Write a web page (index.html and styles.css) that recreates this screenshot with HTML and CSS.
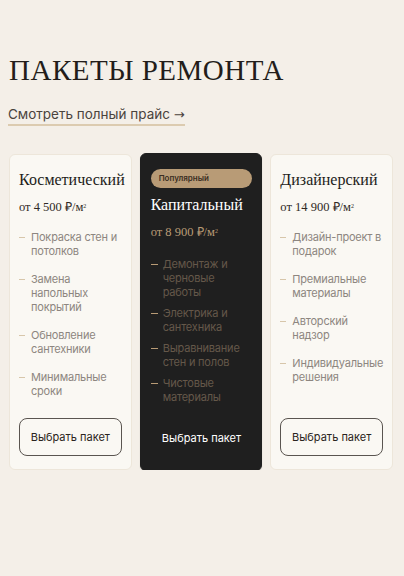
FILE: index.html
```html
<!DOCTYPE html>
<html lang="ru">
<head>
<meta charset="UTF-8">
<meta name="viewport" content="width=device-width, initial-scale=1.0">
<title>Пакеты ремонта</title>
<link rel="stylesheet" href="styles.css">
</head>
<body>

<section class="packages">
    <h2 class="packages-title">ПАКЕТЫ РЕМОНТА</h2>
    <a href="#" class="price-link">Смотреть полный прайс <span class="arrow">→</span></a>

    <div class="cards">
        <!-- Light card -->
        <div class="card">
            <h3 class="card-title">Косметический</h3>
            <p class="card-price">от 4 500 ₽/м<sup>2</sup></p>
            <ul class="card-list">
                <li>Покраска стен и потолков</li>
                <li>Замена напольных покрытий</li>
                <li>Обновление сантехники</li>
                <li>Минимальные сроки</li>
            </ul>
            <button class="card-button">Выбрать пакет</button>
        </div>

        <!-- Featured card -->
        <div class="card card-dark">
            <span class="badge">Популярный</span>
            <h3 class="card-title">Капитальный</h3>
            <p class="card-price">от 8 900 ₽/м<sup>2</sup></p>
            <ul class="card-list">
                <li>Демонтаж и черновые работы</li>
                <li>Электрика и сантехника</li>
                <li>Выравнивание стен и полов</li>
                <li>Чистовые материалы</li>
            </ul>
            <button class="card-button">Выбрать пакет</button>
        </div>

        <div class="card">
            <h3 class="card-title">Дизайнерский</h3>
            <p class="card-price">от 14 900 ₽/м<sup>2</sup></p>
            <ul class="card-list">
                <li>Дизайн-проект в подарок</li>
                <li>Премиальные материалы</li>
                <li>Авторский надзор</li>
                <li>Индивидуальные решения</li>
            </ul>
            <button class="card-button">Выбрать пакет</button>
        </div>
    </div>
</section>

</body>
</html>
```

FILE: styles.css
```css
body {
    margin: 0;
    background-color: #f4efe8;
    font-family: Inter, "Noto Sans", sans-serif;
    color: #2a2420;
}

/* Section wrapper */
.packages {
    padding: 52px 11px 0 9px;
}

.packages-title {
    margin: 0;
    font-family: "Liberation Serif", serif;
    font-weight: normal;
    font-size: 29px;
    line-height: 36px;
    letter-spacing: 0.5px;
    color: #231d1a;
}

.price-link {
    display: inline-block;
    margin-top: 18px;
    font-size: 13.5px;
    line-height: 16px;
    color: #4a433d;
    text-decoration: none;
    border-bottom: 2px solid #dccbb0;
    padding-bottom: 1px;
    margin-left: -1px;
}

.arrow {
    font-family: "DejaVu Sans", sans-serif;
    font-size: 13px;
}

/* Cards grid */
.cards {
    display: grid;
    grid-template-columns: repeat(3, minmax(0, 1fr));
    gap: 8px;
    margin-top: 28px;
}

.card {
    display: flex;
    flex-direction: column;
    background-color: #faf8f3;
    border: 1px solid #ede6da;
    border-radius: 6px;
    padding: 14px 9px 13px 9px;
}

.card-dark {
    background-color: #1f1f1f;
    border-color: #1f1f1f;
    margin: -1px 0;
    padding-left: 10px;
    box-shadow: 0 1px 1px rgba(0, 0, 0, 0.25);
}

.badge {
    align-self: stretch;
    height: 19px;
    line-height: 19px;
    border-radius: 10px;
    background-color: #b89b76;
    color: #3a2e22;
    font-size: 8px;
    font-weight: 600;
    padding-left: 8px;
    margin: 1px 0 6px 0;
}

.card-title {
    margin: 0;
    font-family: "Liberation Serif", serif;
    font-weight: normal;
    font-size: 16px;
    line-height: 21px;
    color: #231d1a;
}

.card-dark .card-title {
    color: #ffffff;
}

.card-price {
    margin: 10px 0 0 0;
    font-family: "Liberation Serif", serif;
    font-size: 12.5px;
    line-height: 15px;
    color: #2f2824;
}

.card-price sup {
    font-size: 6px;
    vertical-align: top;
    position: relative;
    top: -1px;
}

.card-dark .card-price {
    color: #b89b76;
}

/* Feature list */
.card-list {
    list-style: none;
    margin: 15px 0 0 0;
    padding: 0;
    flex: 1;
    display: flex;
    flex-direction: column;
    gap: 14px;
    font-size: 11px;
    line-height: 14px;
    letter-spacing: -0.2px;
    color: #8d8680;
}

.card-dark .card-list {
    gap: 7px;
    color: #65584a;
    margin-top: 17px;
}

.card-list li {
    position: relative;
    padding-left: 12px;
}

.card-list li::before {
    content: "";
    position: absolute;
    left: 0;
    top: 7px;
    width: 6px;
    height: 1px;
    background-color: #d7c6aa;
}

.card-dark .card-list li::before {
    background-color: #b89b76;
    width: 7px;
}

.card-button {
    margin-top: 15px;
    height: 38px;
    border: 1px solid #5a5550;
    border-radius: 8px;
    background: transparent;
    font-family: Inter, "Noto Sans", sans-serif;
    font-size: 11px;
    color: #2a2420;
    cursor: pointer;
}

.card-dark .card-button {
    border-color: transparent;
    color: #ffffff;
}
```
